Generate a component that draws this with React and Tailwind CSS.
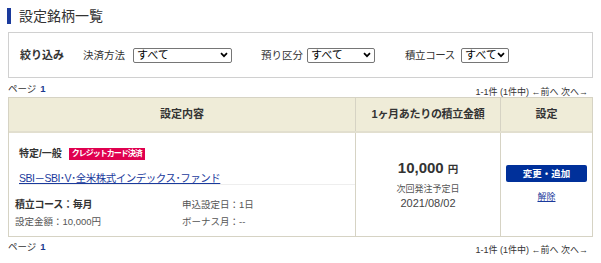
import React from 'react';

const font = { fontFamily: '"Liberation Sans", "Noto Sans CJK JP", sans-serif' };

function Select({ width }) {
  return (
    <div className={`flex items-center justify-between h-[15px] shrink-0 border border-[#767676] rounded-[2px] bg-white pl-[3px] pr-[3px] whitespace-nowrap ${width}`}>
      <span className="text-[11px] text-black leading-none">すべて</span>
      <svg width="8" height="6" viewBox="0 0 8 6" className="shrink-0">
        <path d="M1 1.2l3 3 3-3" stroke="#000" strokeWidth="1.7" fill="none" />
      </svg>
    </div>
  );
}

function Pager() {
  return (
    <div className="flex justify-between px-[8px] text-[9.5px] leading-[12px] text-[#333] h-[12px]">
      <div className="flex items-center gap-[4px]">
        <span>ページ</span>
        <span className="font-bold text-[#1a3a8f]">1</span>
      </div>
      <div className="pr-[5px] mt-[3px] text-[9px] whitespace-nowrap">1-1件 (1件中) ←前へ 次へ→</div>
    </div>
  );
}

export default function App() {
  return (
    <div className="w-[601px] h-[263px] bg-white overflow-hidden" style={font}>
      <div className="flex items-center gap-[8px] pl-[7px] pt-[8px] h-[24px]">
        <div className="w-[4px] h-[16px] bg-[#1a3a9c]" />
        <h1 className="text-[14px] text-[#333] leading-[16px]">設定銘柄一覧</h1>
      </div>

      <div className="mx-[8px] mt-[8px] h-[46px] border border-[#d0d0d0] flex items-center pl-[11px] text-[10.5px] leading-none text-[#333] whitespace-nowrap">
        <span className="font-bold text-[11px] w-[63px] shrink-0">絞り込み</span>
        <span className="w-[50px] shrink-0">決済方法</span>
        <Select width="w-[99px]" />
        <span className="w-[75px] pl-[29px] shrink-0">預り区分</span>
        <Select width="w-[68px]" />
        <span className="w-[86px] pl-[30px] shrink-0 tracking-[-0.4px]">積立コース</span>
        <Select width="w-[48px]" />
      </div>

      <div className="mt-[5px]">
        <Pager />
      </div>

      <div className="mx-[8px] mt-[2px] border border-[#d6d3c4] text-[#333]">
        <div className="grid grid-cols-[346px_145px_1fr] h-[35px] bg-[#efecd8] border-b-[2px] border-[#e2dfcf] text-[11px] font-bold leading-none">
          <div className="flex items-center justify-center">設定内容</div>
          <div className="flex items-center justify-center border-l border-[#d6d3c4] tracking-[-0.3px]">1ヶ月あたりの積立金額</div>
          <div className="flex items-center justify-center border-l border-[#d6d3c4]">設定</div>
        </div>
        <div className="grid grid-cols-[346px_145px_1fr] h-[103px]">
          <div className="pt-[14px]">
            <div className="ml-[10px] flex items-center gap-[7px] h-[14px]">
              <span className="text-[10px] font-bold leading-none">特定/一般</span>
              <span className="inline-block bg-[#e0004f] text-white text-[8px] font-bold leading-[12px] px-[3px] h-[12px] whitespace-nowrap tracking-[-1px]">クレジットカード決済</span>
            </div>
            <div className="ml-[10px] mt-[4px] h-[20px] border-b border-[#eeeeee]">
              <a href="#" className="text-[10.5px] leading-[14px] tracking-[-0.5px] text-[#1a3a9c] underline whitespace-nowrap">SBI－SBI･V･全米株式インデックス･ファンド</a>
            </div>
            <div className="ml-[6px] grid grid-cols-[167px_1fr] mt-[13px] gap-y-[3px] leading-[14px]">
              <span className="font-bold text-[10px] tracking-[-0.3px]">積立コース：毎月</span>
              <span className="text-[9.5px] text-[#555]">申込設定日：1日</span>
              <span className="text-[9.5px] text-[#555]">設定金額：10,000円</span>
              <span className="text-[9.5px] text-[#555]">ボーナス月：--</span>
            </div>
          </div>
          <div className="border-l border-[#d6d3c4] flex flex-col items-center pt-[25px]">
            <div className="flex items-baseline gap-[4px] h-[20px] leading-[20px]">
              <span className="text-[15px] font-bold">10,000</span>
              <span className="text-[10.5px] font-bold">円</span>
            </div>
            <div className="text-[9px] leading-[12px] text-[#555] mt-[5px]">次回発注予定日</div>
            <div className="text-[11px] leading-[12px] text-[#444] mt-[2px]">2021/08/02</div>
          </div>
          <div className="border-l border-[#d6d3c4] flex flex-col items-center pt-[32px]">
            <div className="w-[81px] h-[17px] bg-[#00309a] rounded-[2px] flex items-center justify-center text-white text-[9.5px] font-bold leading-none">変更・追加</div>
            <a href="#" className="mt-[9px] text-[9px] leading-[12px] text-[#1a3a9c] underline">解除</a>
          </div>
        </div>
      </div>

      <div className="mt-[4px]">
        <Pager />
      </div>
    </div>
  );
}
